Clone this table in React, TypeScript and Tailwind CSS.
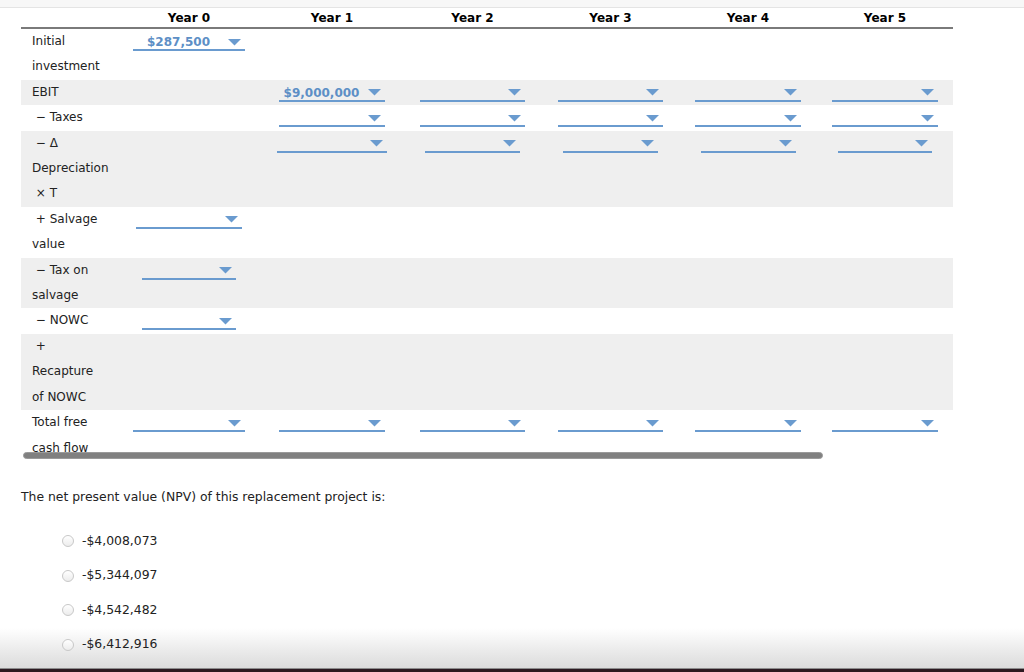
import React from "react";

type Cell = { w: string; value?: string } | null;

type Row = {
  lines: string[];
  gray?: boolean;
  cells: Cell[];
};

const years = ["Year 0", "Year 1", "Year 2", "Year 3", "Year 4", "Year 5"];

const rows: Row[] = [
  {
    lines: ["Initial", "investment"],
    cells: [{ w: "w-[112px]", value: "$287,500" }, null, null, null, null, null],
  },
  {
    lines: ["EBIT"],
    gray: true,
    cells: [
      null,
      { w: "w-[106px]", value: "$9,000,000" },
      { w: "w-[105px]" },
      { w: "w-[105px]" },
      { w: "w-[106px]" },
      { w: "w-[106px]" },
    ],
  },
  {
    lines: ["\u00a0− Taxes"],
    cells: [
      null,
      { w: "w-[106px]" },
      { w: "w-[105px]" },
      { w: "w-[105px]" },
      { w: "w-[106px]" },
      { w: "w-[106px]" },
    ],
  },
  {
    lines: ["\u00a0− Δ", "Depreciation", "\u00a0× T"],
    gray: true,
    cells: [
      null,
      { w: "w-[110px]" },
      { w: "w-[95px]" },
      { w: "w-[95px]" },
      { w: "w-[95px]" },
      { w: "w-[94px]" },
    ],
  },
  {
    lines: ["\u00a0+ Salvage", "value"],
    cells: [{ w: "w-[106px]" }, null, null, null, null, null],
  },
  {
    lines: ["\u00a0− Tax on", "salvage"],
    gray: true,
    cells: [{ w: "w-[94px]" }, null, null, null, null, null],
  },
  {
    lines: ["\u00a0− NOWC"],
    cells: [{ w: "w-[94px]" }, null, null, null, null, null],
  },
  {
    lines: ["\u00a0+", "Recapture", "of NOWC"],
    gray: true,
    cells: [null, null, null, null, null, null],
  },
  {
    lines: ["Total free", "cash flow"],
    cells: [
      { w: "w-[112px]" },
      { w: "w-[106px]" },
      { w: "w-[105px]" },
      { w: "w-[105px]" },
      { w: "w-[106px]" },
      { w: "w-[106px]" },
    ],
  },
];

const options = ["-$4,008,073", "-$5,344,097", "-$4,542,482", "-$6,412,916"];

function Arrow() {
  return (
    <svg width="13" height="7" viewBox="0 0 13 7" className="shrink-0 mr-[4px]">
      <polygon points="0,0 13,0 6.5,6.5" fill="#6a9bcf" />
    </svg>
  );
}

function Dropdown({ cell }: { cell: { w: string; value?: string } }) {
  return (
    <div className={`${cell.w} h-[22px] border-b-2 border-[#6a9bcf] flex items-center pt-[6px]`}>
      <span className="flex-1 text-center pr-[4px] text-[12px] font-bold text-[#5d8fc6] leading-none">
        {cell.value ?? ""}
      </span>
      <Arrow />
    </div>
  );
}

export default function App() {
  return (
    <div className="w-[1024px] h-[672px] overflow-hidden flex flex-col font-['DejaVu_Sans',sans-serif] text-[12px] text-[#222] bg-[linear-gradient(to_bottom,#ffffff_0px,#ffffff_628px,#dcdcdc_667px)]">
      {/* top strip */}
      <div className="h-[8px] shrink-0 bg-[#f7f7f7] border-b border-[#e4e4e4]" />

      {/* scroll area with the table */}
      <div className="h-[444px] shrink-0 overflow-hidden pl-[21px]">
        <div className="w-[932px]">
          <div className="grid grid-cols-[96px_144px_142px_139px_137px_138px_136px] h-[21px] border-b-2 border-[#7a7a7a] items-center">
            <div />
            {years.map((y) => (
              <div key={y} className="text-center font-bold text-black">
                {y}
              </div>
            ))}
          </div>

          {rows.map((row, i) => (
            <div
              key={i}
              className={`grid grid-cols-[96px_144px_142px_139px_137px_138px_136px] ${row.gray ? "bg-[#efefef]" : ""}`}
            >
              <div className="pl-[11px] leading-[25.4px] whitespace-nowrap">
                {row.lines.map((l, j) => (
                  <div key={j}>{l}</div>
                ))}
              </div>
              {row.cells.map((c, j) => (
                <div key={j} className="flex justify-center items-start">
                  {c && <Dropdown cell={c} />}
                </div>
              ))}
            </div>
          ))}
        </div>
      </div>

      {/* scrollbar */}
      <div className="ml-[23px] w-[800px] h-[7px] rounded-full bg-[#808080] border border-[#9a9a9a] shrink-0" />

      <p className="mt-[28px] pl-[21px] leading-[20px] text-[12.4px] text-[#222]">
        The net present value (NPV) of this replacement project is:
      </p>

      <div className="mt-[24px] pl-[62px] flex flex-col gap-[14.5px] text-[12.4px]">
        {options.map((o) => (
          <label key={o} className="flex items-center h-[20px]">
            <span className="w-[12px] h-[12px] rounded-full border border-[#c8c8c8] bg-linear-to-b from-white to-[#ececec] shrink-0" />
            <span className="ml-[8px] text-[#222]">{o}</span>
          </label>
        ))}
      </div>

      {/* bottom bar */}
      <div className="mt-auto h-[4px] shrink-0 border-t border-[#8c8c8c] bg-[#2c1a21]" />
    </div>
  );
}
